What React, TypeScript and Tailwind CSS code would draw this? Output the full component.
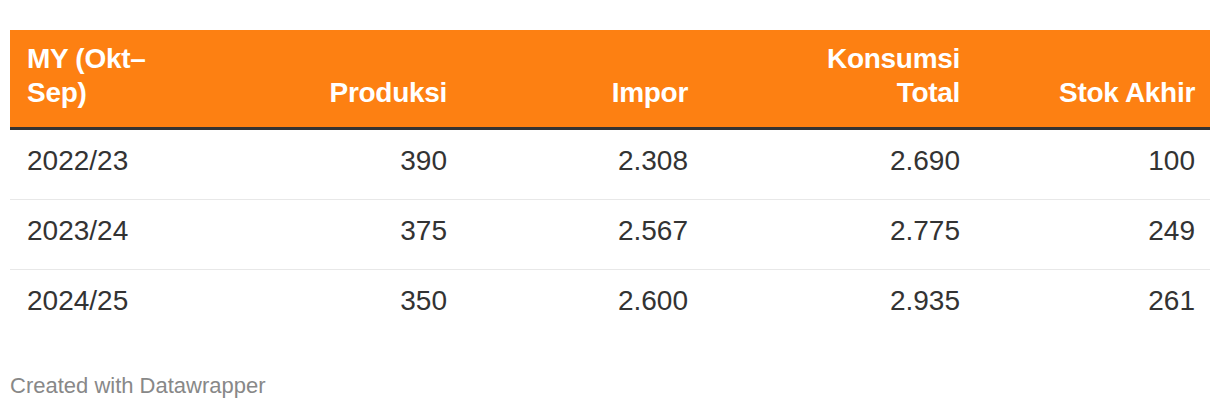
import React from "react";

const rows = [
  ["2022/23", "390", "2.308", "2.690", "100"],
  ["2023/24", "375", "2.567", "2.775", "249"],
  ["2024/25", "350", "2.600", "2.935", "261"],
];

export default function App() {
  return (
    <div
      className="w-[1220px] h-[410px] bg-white px-[10px] pt-[30px]"
      style={{ fontFamily: '"Liberation Sans", Arial, sans-serif' }}
    >
      <div className="grid grid-cols-[210px_242px_241px_272px_235px] bg-[#fd8012] border-b-[3px] border-[#333333] text-white font-bold text-[28px] leading-[34px] tracking-[-0.3px]">
        <div className="pl-[17px] pr-[15px] pt-[12px] pb-[17px] flex items-end">
          <span>
            MY (Okt–
            <br />
            Sep)
          </span>
        </div>
        <div className="px-[15px] pt-[12px] pb-[17px] flex items-end justify-end">Produksi</div>
        <div className="px-[15px] pt-[12px] pb-[17px] flex items-end justify-end">Impor</div>
        <div className="px-[15px] pt-[12px] pb-[17px] flex items-end justify-end text-right">
          <span>
            Konsumsi
            <br />
            Total
          </span>
        </div>
        <div className="px-[15px] pt-[12px] pb-[17px] flex items-end justify-end">Stok Akhir</div>
      </div>
      {rows.map((r, i) => (
        <div
          key={i}
          className={`grid grid-cols-[210px_242px_241px_272px_235px] text-[#333333] text-[28px] leading-[34px] ${
            i < rows.length - 1 ? "border-b border-[#e8e8e8]" : ""
          }`}
        >
          {r.map((c, j) => (
            <div
              key={j}
              className={`pt-[14px] pb-[21px] ${j === 0 ? "pl-[17px] pr-[15px] text-left" : "px-[15px] text-right"}`}
            >
              {c}
            </div>
          ))}
        </div>
      ))}
      <div className="mt-[34px] text-[22px] leading-[26px] text-[#888888]">Created with Datawrapper</div>
    </div>
  );
}
